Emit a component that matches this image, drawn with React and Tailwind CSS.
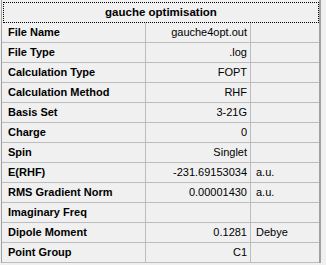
const rows = [
  ['File Name', 'gauche4opt.out', ''],
  ['File Type', '.log', ''],
  ['Calculation Type', 'FOPT', ''],
  ['Calculation Method', 'RHF', ''],
  ['Basis Set', '3-21G', ''],
  ['Charge', '0', ''],
  ['Spin', 'Singlet', ''],
  ['E(RHF)', '-231.69153034', 'a.u.'],
  ['RMS Gradient Norm', '0.00001430', 'a.u.'],
  ['Imaginary Freq', '', ''],
  ['Dipole Moment', '0.1281', 'Debye'],
  ['Point Group', 'C1', ''],
];

export default function App() {
  return (
    <div className="w-[326px] h-[265px] bg-[#f0f0f0] overflow-hidden text-[11px] leading-none text-black [font-family:'Liberation_Sans',Arial,sans-serif]">
      <div className="ml-[1px] w-[320px] border-l border-r-2 border-[#a0a0a0]">
        {/* title row with focus rectangle */}
        <div className="h-[23px] pt-[2px] pl-[1px] pr-0">
          <div className="h-[21px] border border-dotted border-black flex items-center justify-center font-bold text-[11.5px]">
            gauche optimisation
          </div>
        </div>
        {rows.map(([label, value, unit]) => (
          <div key={label} className="flex h-[20px] border-b border-[#bdbdbd]">
            <div className="w-[144px] shrink-0 border-r border-[#bdbdbd] pl-[6px] flex items-center font-bold">
              {label}
            </div>
            <div className="w-[105px] shrink-0 border-r border-[#bdbdbd] pr-[3px] flex items-center justify-end">
              {value}
            </div>
            <div className="flex-1 pl-[5px] flex items-center">{unit}</div>
          </div>
        ))}
      </div>
    </div>
  );
}
